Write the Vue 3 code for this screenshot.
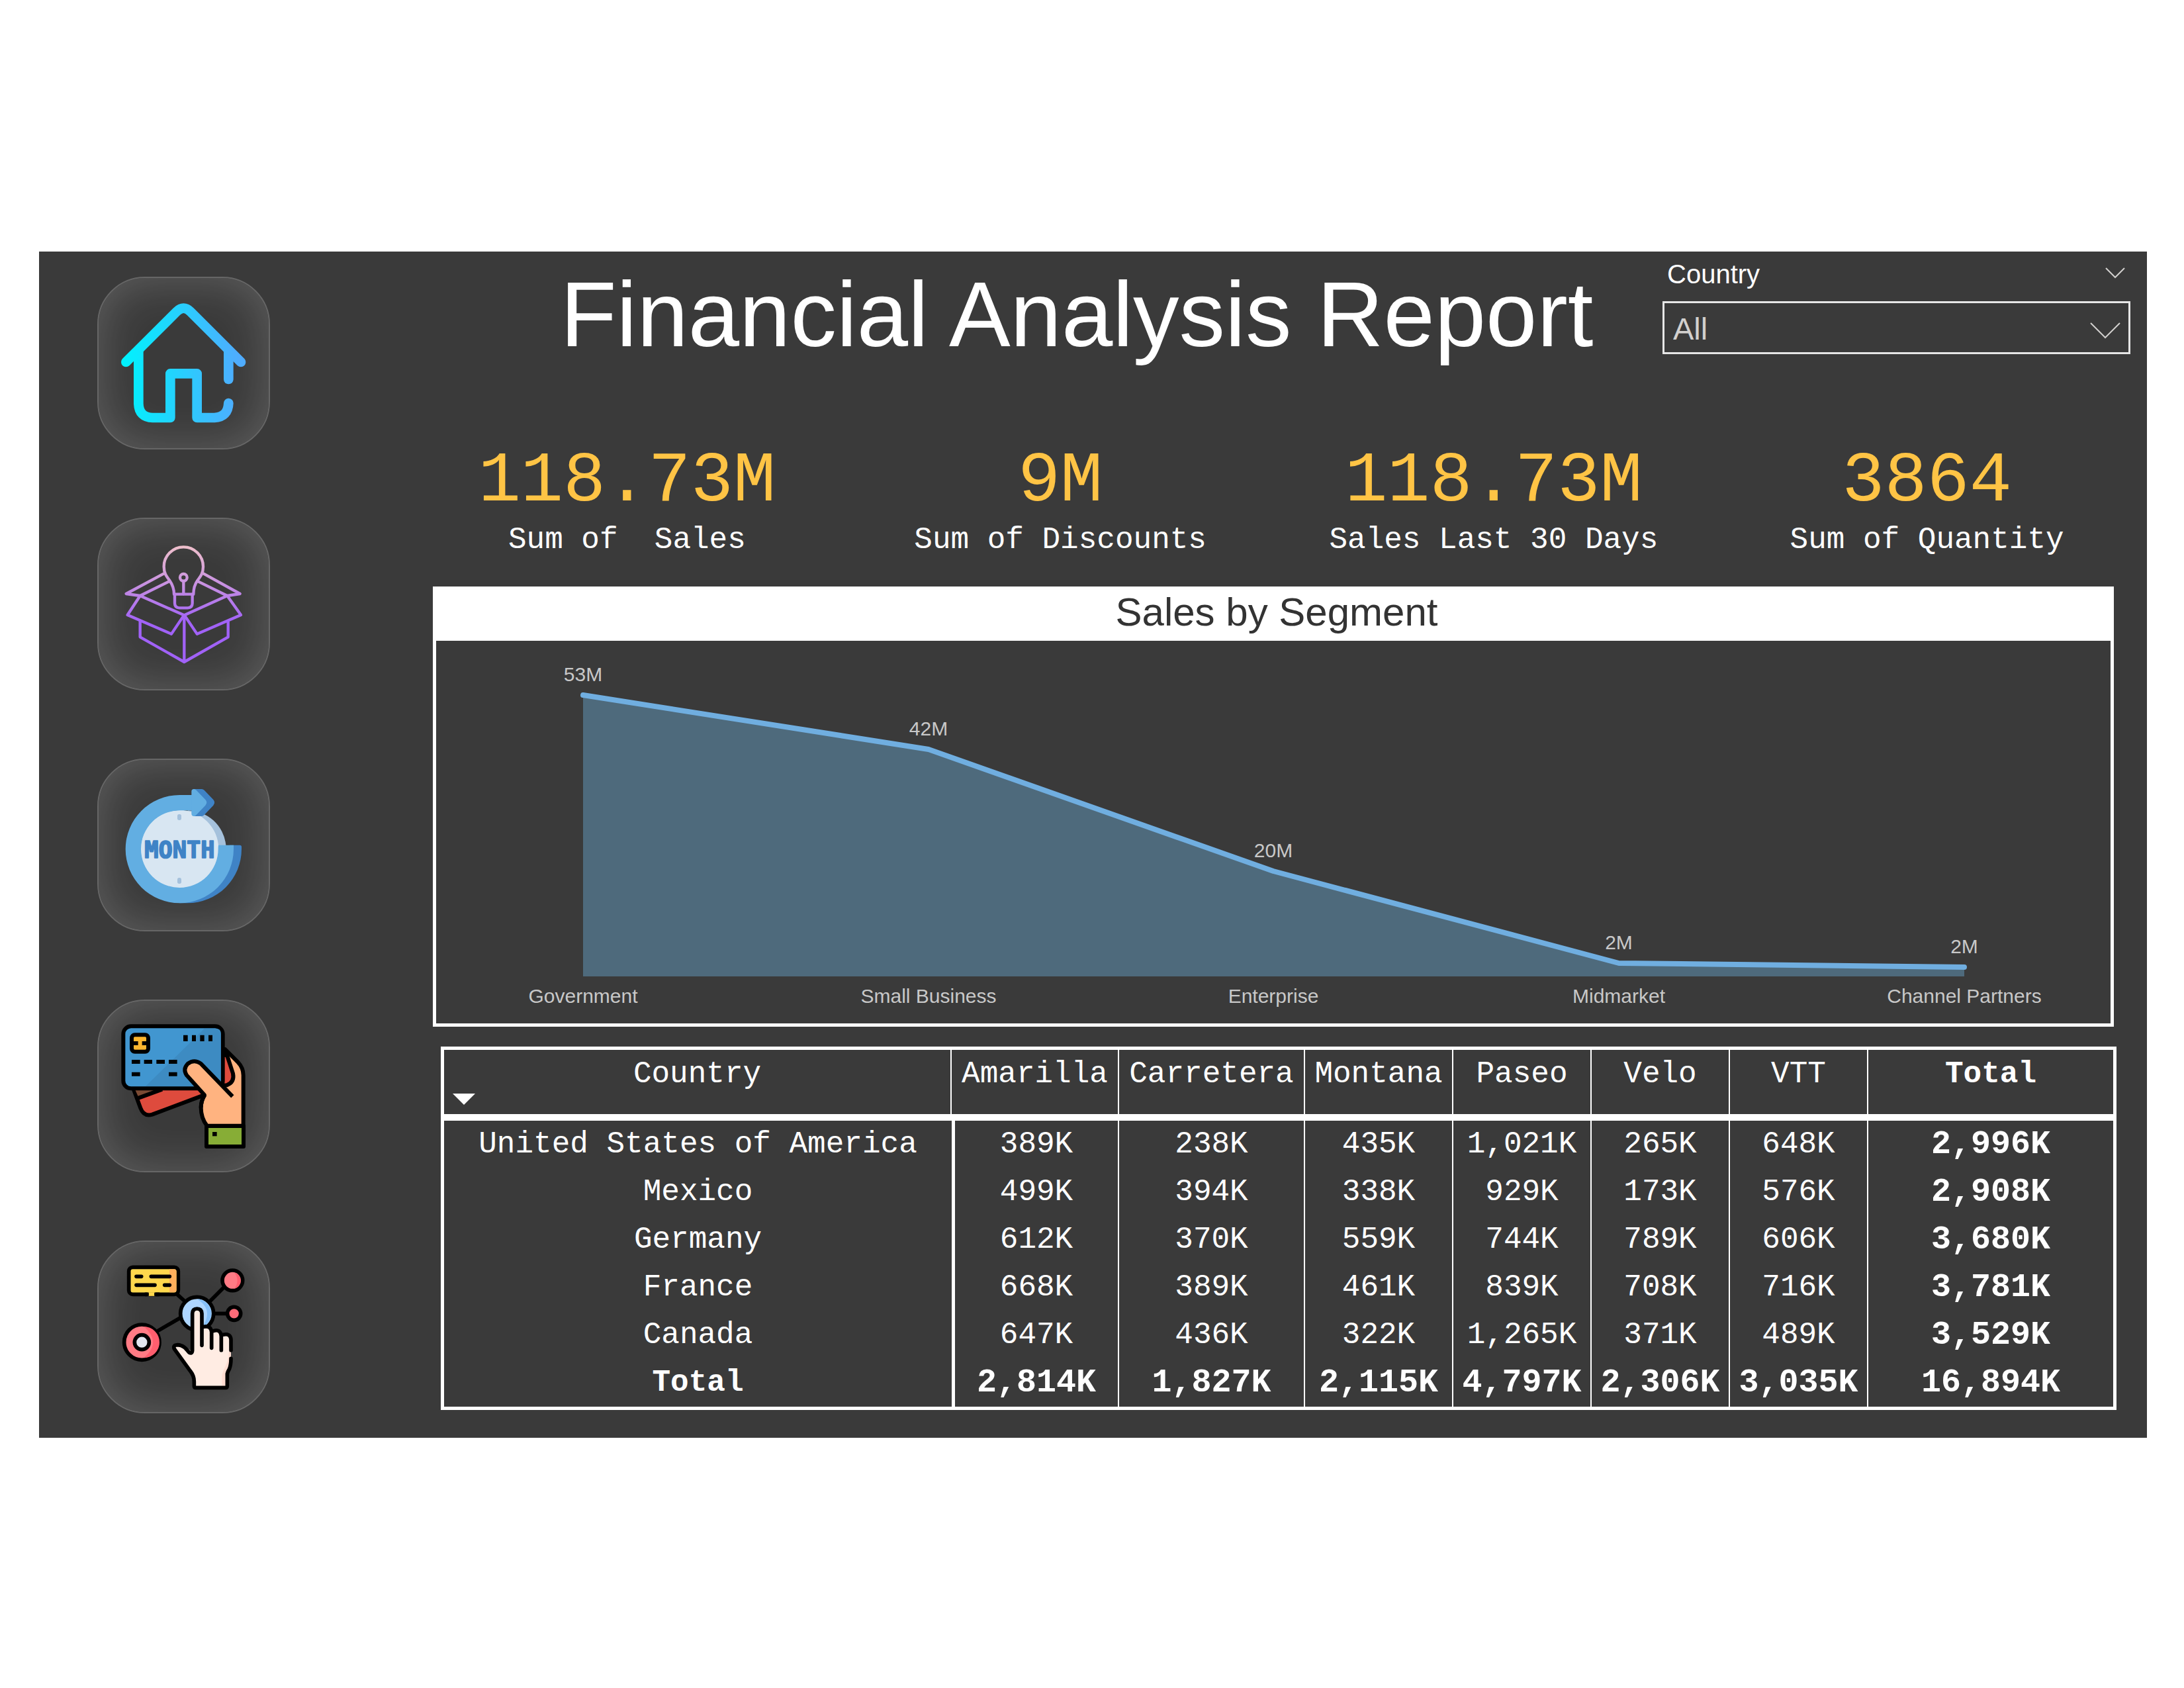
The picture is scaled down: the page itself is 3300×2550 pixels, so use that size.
<script setup>
import { ref } from 'vue'

const country = ref('All')

const kpis = [
  { value: '118.73M', label: 'Sum of  Sales' },
  { value: '9M', label: 'Sum of Discounts' },
  { value: '118.73M', label: 'Sales Last 30 Days' },
  { value: '3864', label: 'Sum of Quantity' },
]

const segments = [
  { name: 'Government', label: '53M', x: 222, y: 82 },
  { name: 'Small Business', label: '42M', x: 744, y: 164 },
  { name: 'Enterprise', label: '20M', x: 1265, y: 348 },
  { name: 'Midmarket', label: '2M', x: 1787, y: 487 },
  { name: 'Channel Partners', label: '2M', x: 2309, y: 493 },
]
const baseline = 507
const linePoints = segments.map((s) => `${s.x},${s.y}`).join(' ')
const areaPoints = `222,${baseline} ${linePoints} 2309,${baseline}`

const products = ['Amarilla', 'Carretera', 'Montana', 'Paseo', 'Velo', 'VTT']
const rows = [
  { name: 'United States of America', values: ['389K', '238K', '435K', '1,021K', '265K', '648K'], total: '2,996K' },
  { name: 'Mexico', values: ['499K', '394K', '338K', '929K', '173K', '576K'], total: '2,908K' },
  { name: 'Germany', values: ['612K', '370K', '559K', '744K', '789K', '606K'], total: '3,680K' },
  { name: 'France', values: ['668K', '389K', '461K', '839K', '708K', '716K'], total: '3,781K' },
  { name: 'Canada', values: ['647K', '436K', '322K', '1,265K', '371K', '489K'], total: '3,529K' },
]
const totals = ['2,814K', '1,827K', '2,115K', '4,797K', '2,306K', '3,035K', '16,894K']
</script>

<template>
  <div class="report">
    <nav class="sidebar" aria-label="Report pages">
      <button class="tile" type="button" aria-label="Home">
        <svg viewBox="57 59 771 771">
          <defs>
            <linearGradient id="home-grad" gradientUnits="userSpaceOnUse" x1="170" y1="0" x2="690" y2="0">
              <stop offset="0" stop-color="#00f2fe" />
              <stop offset="1" stop-color="#4facfe" />
            </linearGradient>
          </defs>
          <g fill="none" stroke="url(#home-grad)" stroke-width="44" stroke-linecap="round" stroke-linejoin="round">
            <path d="M181 440 L411 211 Q442 181 473 211 L702 440" />
            <path d="M238 390 V628 Q240 690 302 692 H382 V492 H503 V692 H582 Q644 688 646 626" />
            <path d="M646 390 V518" />
          </g>
        </svg>
      </button>

      <button class="tile" type="button" aria-label="Products">
        <svg viewBox="57 54 771 771">
          <defs>
            <linearGradient id="box-grad" gradientUnits="userSpaceOnUse" x1="0" y1="176" x2="0" y2="520">
              <stop offset="0" stop-color="#efc0cb" />
              <stop offset="1" stop-color="#a162f7" />
            </linearGradient>
          </defs>
          <g fill="none" stroke="url(#box-grad)" stroke-width="13" stroke-linecap="round" stroke-linejoin="round">
            <path d="M399 395 Q399 362 379 333 C363 312 353 298 353 270 A89 89 0 0 1 531 270 C531 298 521 312 505 333 Q487 358 487 395 Z" />
            <path d="M402 395 V436 Q402 457 423 457 H461 Q482 457 482 436 V395" />
            <circle cx="442" cy="319" r="16" />
            <path d="M442 336 V394" />
            <path d="M352 302 L182 393 L245 402 L376 337" />
            <path d="M533 302 L698 393 L640 402 L508 337" />
            <path d="M245 402 L188 489 L387 575 L444 490 Z" />
            <path d="M640 402 L702 489 L503 575 L446 490 Z" />
            <path d="M245 518 V589 L445 702 L644 589 V518 M445 490 V702" />
          </g>
        </svg>
      </button>

      <button class="tile" type="button" aria-label="Month">
        <svg viewBox="57 57 771 771">
          <path fill="#a5c1dc" d="M460 286 A175 175 0 0 1 634 443 L634 461 H560 Z" />
          <path fill="#3f83c6" d="M424 706 H460 A245 245 0 0 0 705 461 V451 Q705 443 697 443 H650 V461 Z" />
          <circle fill="#d8e6f2" cx="424" cy="461" r="177" />
          <path fill="#62aee2" d="M480 216 H424 A245 245 0 1 0 669 461 V443 H600 Q599 452 599 461 A175 175 0 1 1 424 286 H480 Z" />
          <path fill="#3f83c6" d="M488 189 H524 Q531 189 536 194 L577 237 Q588 250 577 263 L536 306 Q531 312 524 312 H488 Z" />
          <path fill="#62aee2" d="M478 200 Q478 189 489 189 Q495 189 500 194 L541 237 Q553 250 541 263 L500 306 Q495 312 489 312 Q478 312 478 301 Z" />
          <rect fill="#a5c1dc" x="414" y="303" width="18" height="27" rx="8" />
          <rect fill="#a5c1dc" x="414" y="591" width="18" height="27" rx="8" />
          <text class="month" x="424" y="500" text-anchor="middle">MONTH</text>
        </svg>
      </button>

      <button class="tile" type="button" aria-label="Payments">
        <svg viewBox="57 51 771 771">
          <g stroke="#000" stroke-width="18" stroke-linejoin="round">
            <path fill="#de4b3d" d="M213 445 L247 537 Q262 577 300 566 L548 473 L540 430 Z" />
            <path fill="#7a4a33" stroke="none" d="M222 452 H325 L236 484 Z" />
            <path fill="none" d="M230 494 L345 452" />
            <path fill="#ffb380" d="M630 270 L688 328 Q713 354 713 388 V617 H548 Q521 582 521 535 Q521 505 537 480 L560 430 H630 Z" />
            <path fill="#de4b3d" d="M618 292 L640 300 L666 380 Q674 420 638 433 L610 436 Z" />
            <rect fill="#4196d0" x="169" y="166" width="451" height="282" rx="35" />
          </g>
          <path fill="#3d8bc2" d="M536 177 H590 Q611 177 611 198 V438 H270 Z" />
          <path fill="#ffb380" d="M541 478 L456 386 Q440 358 461 336 Q490 314 520 335 L664 484 L610 540 Z" />
          <path fill="none" stroke="#000" stroke-width="18" stroke-linejoin="round" d="M521 535 Q521 505 537 478 L456 388 Q438 360 461 336 Q490 314 520 335 L664 484" />
          <rect x="207" y="205" width="75" height="76" rx="14" fill="#fdb62f" stroke="#000" stroke-width="18" />
          <path d="M216 234 h20 v18 h-20 z M254 234 h20 v18 h-20 z" />
          <path d="M441 206 h20 v28 h-20 z M480 206 h18 v28 h-18 z M517 206 h19 v28 h-19 z M555 206 h18 v28 h-18 z" />
          <path d="M207 318 h38 v18 h-38 z M263 318 h37 v18 h-37 z M319 318 h38 v18 h-38 z M375 318 h38 v18 h-38 z M207 374 h38 v18 h-38 z M375 374 h38 v18 h-38 z" />
          <rect x="546" y="618" width="168" height="93" fill="#87ad36" stroke="#000" stroke-width="18" stroke-linejoin="round" />
          <rect x="573" y="645" width="20" height="19" />
        </svg>
      </button>

      <button class="tile" type="button" aria-label="Interactions">
        <svg viewBox="57 47 771 771">
          <g stroke="#000" stroke-width="17" stroke-linecap="round" stroke-linejoin="round">
            <path fill="none" d="M410 282 L445 314 M564 314 L624 254 M585 372 H640 M326 450 L426 392" />
            <rect x="194" y="162" width="224" height="123" rx="18" fill="#ffd84d" />
            <path fill="#ffaf5c" stroke="none" d="M378 171 H398 Q410 171 410 183 V264 Q410 276 398 276 H378 Z" />
            <path stroke="#ffd84d" stroke-linecap="butt" d="M284 284 H310" />
            <path fill="none" d="M276 285 H270 M318 285 H330 M228 204 H251 M295 204 H379 M228 243 H312 M356 243 H379" />
            <circle cx="664" cy="222" r="46" fill="#ff7b85" />
            <path stroke="none" fill="#ff5e6e" d="M672 186 A38 38 0 0 1 672 260 Q700 222 672 186 Z" />
            <circle cx="671" cy="372" r="30" fill="#ff6b78" />
            <circle cx="503" cy="372" r="75" fill="#aed6ff" />
            <path stroke="none" fill="#86c0f8" d="M503 306 A66 66 0 0 1 535 429 V420 Q575 350 503 306 Z" />
            <circle cx="253" cy="502" r="80" fill="#ff7b85" />
            <path stroke="none" fill="#ff5e6e" d="M262 431 A71 71 0 0 1 262 573 Q345 502 262 431 Z" />
            <circle cx="253" cy="502" r="33" fill="#e2e7f0" />
            <path stroke="none" fill="#ffece3" d="M482 545 V372 Q484 350 503 350 Q524 350 525 372 V440 Q550 425 565 450 Q590 435 610 465 Q640 455 656 485 V600 L640 645 V706 H490 V672 Q488 655 470 635 L400 535 Q396 515 425 514 Q450 522 482 545 Z" />
            <path stroke="none" fill="#ffddd2" d="M648 545 H657 V600 L640 645 V700 H616 V650 Q622 630 632 610 Q642 590 646 570 Z" />
            <path fill="none" d="M525 516 V372 Q524 350 503 350 Q483 350 482 372 V540 Q480 556 467 548 C452 530 440 515 415 514 Q390 516 402 535 L473 633 Q490 655 490 680 V700 Q490 708 498 708 H632 Q640 708 640 700 V645 Q642 635 650 622 Q657 605 657 576" />
            <path fill="none" d="M533 432 Q566 425 569 455 V528 M577 451 Q610 440 613 475 V538 M621 468 Q655 460 657 490 V538" />
          </g>
        </svg>
      </button>
    </nav>

    <main class="main">
      <header class="header">
        <h1 class="title">Financial Analysis Report</h1>
        <div class="slicer">
          <div class="slicer-head">
            <label for="country">Country</label>
            <button class="collapse" type="button" aria-label="Collapse filter">
              <svg width="30" height="20" viewBox="0 0 30 20" fill="none" stroke="#d2d0ce" stroke-width="2">
                <path d="M1 1 L15 15 L29 1" />
              </svg>
            </button>
          </div>
          <div class="select-box">
            <select id="country" v-model="country">
              <option>All</option>
              <option v-for="row in rows" :key="row.name">{{ row.name }}</option>
            </select>
            <svg class="select-arrow" width="46" height="26" viewBox="0 0 46 26" fill="none" stroke="#d2d0ce" stroke-width="2">
              <path d="M1 1 L23 23 L45 1" />
            </svg>
          </div>
        </div>
      </header>

      <section class="kpis" aria-label="Key figures">
        <div v-for="kpi in kpis" :key="kpi.label" class="kpi">
          <div class="kpi-value">{{ kpi.value }}</div>
          <div class="kpi-label">{{ kpi.label }}</div>
        </div>
      </section>

      <section class="chart">
        <h2 class="chart-title">Sales by Segment</h2>
        <svg class="plot" viewBox="0 0 2530 578" role="img" aria-label="Sales by Segment area chart">
          <polygon class="area" :points="areaPoints" />
          <polyline class="line" :points="linePoints" />
          <g v-for="s in segments" :key="s.name" class="plot-text">
            <text :x="s.x" :y="s.y - 21">{{ s.label }}</text>
            <text :x="s.x" y="547">{{ s.name }}</text>
          </g>
        </svg>
      </section>

      <table class="matrix">
        <colgroup>
          <col class="c-country" />
          <col class="c-amarilla" />
          <col class="c-carretera" />
          <col class="c-montana" />
          <col class="c-narrow" />
          <col class="c-narrow" />
          <col class="c-narrow" />
          <col class="c-total" />
        </colgroup>
        <thead>
          <tr>
            <th scope="col" aria-sort="descending">
              <span>Country</span>
              <svg class="sort" width="34" height="17" viewBox="0 0 34 17"><path fill="#fff" d="M0 0 H34 L17 17 Z" /></svg>
            </th>
            <th v-for="p in products" :key="p" scope="col">{{ p }}</th>
            <th scope="col" class="strong">Total</th>
          </tr>
        </thead>
        <tbody>
          <tr v-for="row in rows" :key="row.name">
            <th scope="row">{{ row.name }}</th>
            <td v-for="(v, i) in row.values" :key="i">{{ v }}</td>
            <td class="sum">{{ row.total }}</td>
          </tr>
          <tr>
            <th scope="row" class="strong">Total</th>
            <td v-for="(t, i) in totals" :key="i" class="sum">{{ t }}</td>
          </tr>
        </tbody>
      </table>
    </main>
  </div>
</template>

<style>
body {
  margin: 0;
  background: #fff;
}
</style>

<style scoped>
.report {
  display: grid;
  grid-template-columns: 561px minmax(0, 1fr);
  margin: 380px 56px 0 59px;
  padding: 0 5px 37px 0;
  background: #3a3a3a;
  color: #fff;
  font-family: "Liberation Sans", Arial, sans-serif;
}

.sidebar {
  display: flex;
  flex-direction: column;
  gap: 103px;
  padding: 38px 0 0 88px;
}

.tile {
  box-sizing: border-box;
  width: 261px;
  height: 261px;
  padding: 0;
  border: 2px solid #666;
  border-radius: 72px;
  background: transparent;
  box-shadow: inset 0 0 72px rgba(255, 255, 255, 0.2);
}

.tile svg {
  display: block;
  width: 100%;
  height: 100%;
}

.month {
  fill: #3f83c6;
  stroke: #3f83c6;
  stroke-width: 5px;
  stroke-linejoin: round;
  font: bold 106px "DejaVu Sans Mono", monospace;
}

.header {
  display: flex;
  min-height: 288px;
  padding-right: 20px;
}

.title {
  flex: 1;
  margin: 0;
  padding-left: 122px;
  font-size: 139px;
  font-weight: 400;
  line-height: 190px;
  text-align: center;
  white-space: nowrap;
}

.slicer {
  width: 707px;
}

.slicer-head {
  display: flex;
  justify-content: space-between;
  align-items: center;
  height: 68px;
  margin-bottom: 7px;
  padding: 0 8px 0 7px;
  font-size: 40px;
}

.collapse {
  display: flex;
  padding: 0;
  border: 0;
  background: transparent;
}

.select-box {
  position: relative;
}

.select-box select {
  display: block;
  box-sizing: border-box;
  width: 100%;
  height: 80px;
  padding: 2px 64px 0 13px;
  border: 3px solid #e6e6e6;
  border-radius: 0;
  appearance: none;
  background: transparent;
  color: #d2d0ce;
  font: 47px "Liberation Sans", Arial, sans-serif;
}

.select-arrow {
  position: absolute;
  top: 32px;
  right: 15px;
  pointer-events: none;
}

.kpis {
  display: grid;
  grid-template-columns: repeat(4, 1fr);
  margin-bottom: 42px;
  font-family: "Liberation Mono", "Courier New", monospace;
  text-align: center;
  white-space: pre;
}

.kpi-value {
  color: #ffc445;
  font-size: 107px;
  line-height: 120px;
}

.kpi-label {
  font-size: 46px;
  line-height: 56px;
}

.chart {
  margin: 0 45px 30px 34px;
  border: 5px solid #fff;
}

.chart-title {
  margin: 0;
  padding: 0 0 9px 10px;
  background: #fff;
  color: #333;
  font-size: 60px;
  font-weight: 400;
  line-height: 68px;
  text-align: center;
}

.plot {
  display: block;
  width: 100%;
}

.area {
  fill: #4e6a7c;
}

.line {
  fill: none;
  stroke: #70aee0;
  stroke-width: 8px;
  stroke-linecap: round;
  stroke-linejoin: round;
}

.plot-text {
  fill: #c8c8c8;
  font-size: 30px;
  text-anchor: middle;
}

.matrix {
  width: calc(100% - 87px);
  margin-left: 46px;
  border: 5px solid #fff;
  border-collapse: separate;
  border-spacing: 0;
  table-layout: fixed;
  font-family: "Liberation Mono", "Courier New", monospace;
  font-size: 46px;
  line-height: 72px;
  text-align: center;
  white-space: nowrap;
}

.c-country { width: 767px; }
.c-amarilla { width: 253px; }
.c-carretera { width: 281px; }
.c-montana { width: 224px; }
.c-narrow { width: 209px; }
.c-total { width: 370px; }

.matrix th,
.matrix td {
  padding: 0;
  font-weight: 400;
}

.matrix thead th {
  padding: 8px 0 14px;
  border-right: 2px solid #fff;
  border-bottom: 10px solid #fff;
  line-height: 58px;
  vertical-align: top;
}

.matrix td {
  border-right: 2px solid #fff;
}

.matrix td:nth-child(2) {
  border-left: 5px solid #fff;
}

.matrix tr > :last-child {
  border-right: 0;
}

.matrix .strong {
  font-weight: 700;
}

.matrix .sum {
  font-size: 50px;
  font-weight: 700;
}

.sort {
  display: block;
  margin: 0 0 0 13px;
}
</style>
